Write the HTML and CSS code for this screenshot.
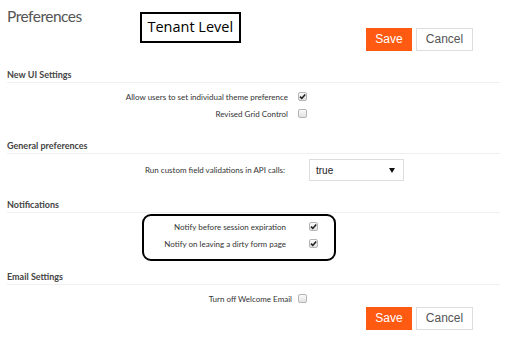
FILE: index.html
```html
<!DOCTYPE html>
<html>
<head>
<meta charset="utf-8">
<link rel="stylesheet" href="styles.css">
</head>
<body>
<div class="page">
  <header class="header">
    <h1 class="title">Preferences</h1>
    <div class="tenant">Tenant Level</div>
    <div class="actions">
      <button class="btn btn-save">Save</button>
      <button class="btn btn-cancel">Cancel</button>
    </div>
  </header>

  <h2 class="section-head">New UI Settings</h2>
  <div class="rows">
    <div class="row">
      <span class="label">Allow users to set individual theme preference</span>
      <span class="check checked"><svg viewBox="0 0 9 9" width="9" height="9"><path d="M2 4.6 L3.8 6.4 L7.2 2.4" fill="none" stroke="#222" stroke-width="1.6"/></svg></span>
    </div>
    <div class="row">
      <span class="label">Revised Grid Control</span>
      <span class="check"></span>
    </div>
  </div>

  <h2 class="section-head section-gap">General preferences</h2>
  <div class="rows">
    <div class="row row-select">
      <span class="label label-select">Run custom field validations in API calls:</span>
      <span class="select">true<svg class="caret" viewBox="0 0 6 5" width="6" height="5"><path d="M0 0 H6 L3 5 Z" fill="#111"/></svg></span>
    </div>
  </div>

  <h2 class="section-head section-gap2">Notifications</h2>
  <div class="callout">
    <div class="row">
      <span class="label label-callout">Notify before session expiration</span>
      <span class="check checked check-callout"><svg viewBox="0 0 9 9" width="9" height="9"><path d="M2 4.6 L3.8 6.4 L7.2 2.4" fill="none" stroke="#222" stroke-width="1.6"/></svg></span>
    </div>
    <div class="row">
      <span class="label label-callout">Notify on leaving a dirty form page</span>
      <span class="check checked check-callout"><svg viewBox="0 0 9 9" width="9" height="9"><path d="M2 4.6 L3.8 6.4 L7.2 2.4" fill="none" stroke="#222" stroke-width="1.6"/></svg></span>
    </div>
  </div>

  <h2 class="section-head section-gap3">Email Settings</h2>
  <div class="rows">
    <div class="row">
      <span class="label label-email">Turn off Welcome Email</span>
      <span class="check check-email"></span>
    </div>
  </div>
  <div class="actions actions-bottom">
    <button class="btn btn-save">Save</button>
    <button class="btn btn-cancel">Cancel</button>
  </div>
</div>
</body>
</html>
```

FILE: styles.css
```css
* { box-sizing: border-box; }
html, body { margin: 0; padding: 0; background: #fff; }
body { font-family: Lato, "Open Sans", sans-serif; color: #444; }
.page { width: 505px; padding: 0 5px 0 7px; }

.header { display: flex; align-items: flex-start; height: 66px; }
.title {
  margin: 6px 0 0 0;
  font-family: Lato, sans-serif;
  font-weight: 400;
  font-size: 15.5px;
  letter-spacing: -0.5px;
  line-height: 20px;
  color: #555;
}
.tenant {
  margin: 12px 0 0 58px;
  width: 101px;
  height: 31px;
  border: 2px solid #000;
  font-family: "Open Sans", Lato, sans-serif;
  font-size: 14.5px;
  line-height: 26px;
  color: #000;
  text-align: center;
}
.actions { display: flex; gap: 4px; margin: 28px 27px 0 auto; }
.actions-bottom { justify-content: flex-end; margin: 0 27px 0 0; }
.btn {
  height: 23px;
  padding: 0;
  font-family: "Liberation Sans", Arial, sans-serif;
  font-size: 12px;
  line-height: 21px;
  border-radius: 0;
}
.btn-save { width: 46px; background: #ff5a12; color: #fff; border: 1px solid #ff5a12; }
.btn-cancel { width: 57px; background: #fff; color: #555; border: 1px solid #ddd; }

.section-head {
  margin: 0;
  height: 17px;
  padding-top: 2px;
  font-family: Lato, sans-serif;
  font-weight: 700;
  font-size: 9px;
  line-height: 14px;
  color: #444;
  border-bottom: 1px solid #f0f0f0;
}
.section-gap { margin-top: 15px; }
.section-gap2 { margin-top: 15px; }
.section-gap3 { margin-top: 7px; }

.rows { padding-top: 5px; }
.row { display: flex; align-items: center; height: 17px; }
.label {
  width: 281px;
  text-align: right;
  font-family: Lato, sans-serif;
  font-size: 8px;
  color: #333;
  white-space: nowrap;
}
.check {
  display: inline-block;
  width: 9px;
  height: 9px;
  margin-left: 10px;
  border: 1px solid #b5b5b5;
  border-radius: 2px;
  background: linear-gradient(#fafafa, #e2e2e2);
  position: relative;
}
.check svg { position: absolute; left: -1px; top: -1px; }

.row-select { height: 22px; }
.label-select { width: 278px; }
.select {
  display: flex;
  align-items: center;
  justify-content: space-between;
  width: 95px;
  height: 22px;
  margin-left: 24px;
  padding: 0 8px 0 6px;
  border: 1px solid #ddd;
  font-family: "Liberation Sans", Arial, sans-serif;
  font-size: 10px;
  color: #222;
}

.callout {
  margin: 1px 0 0 135px;
  width: 194px;
  height: 47px;
  padding-top: 2px;
  border: 2px solid #000;
  border-radius: 9px;
}
.label-callout { width: 142px; }
.check-callout { margin-left: 23px; }

.label-email { width: 285px; }
.check-email { margin-left: 6px; }
```
